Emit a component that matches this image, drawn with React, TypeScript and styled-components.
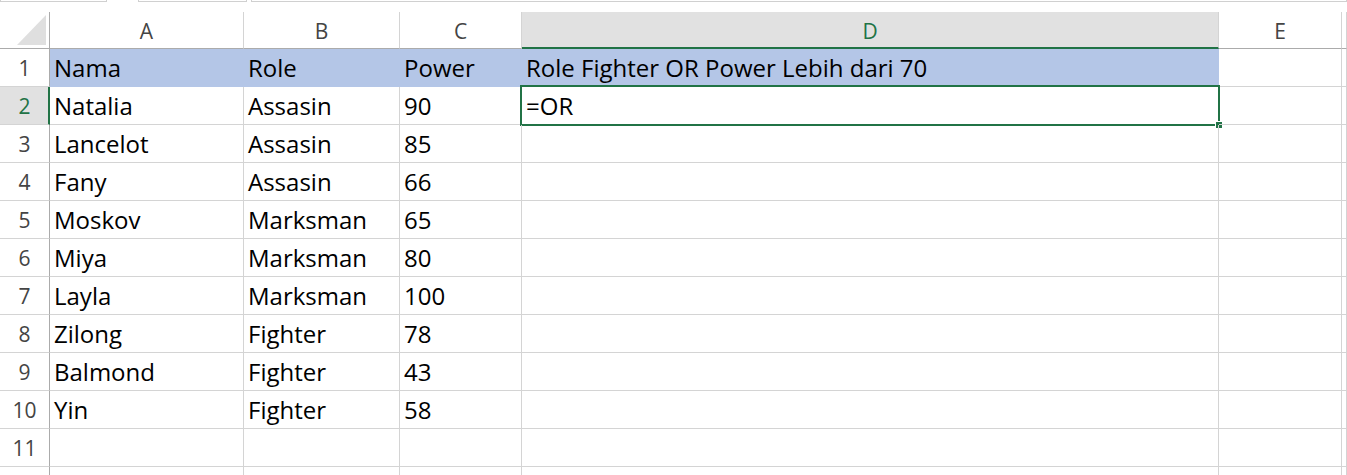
import React from "react";
import styled, { createGlobalStyle, css } from "styled-components";

const GlobalStyle = createGlobalStyle`
  html, body { margin: 0; padding: 0; background: #ffffff; }
  body { font-family: "Open Sans", "Liberation Sans", sans-serif; overflow: hidden; }
`;

const GREEN = "#217346";
const GRID = "#d4d4d4";
const HEAD_LINE = "#ababab";
const FILL = "#b4c6e7";

const Page = styled.div`
  width: 1347px;
  height: 475px;
  overflow: hidden;
  display: flex;
  flex-direction: column;
`;

const TopBar = styled.div`
  height: 12px;
  flex-shrink: 0;
  display: flex;
  align-items: flex-start;
`;

const TopBox = styled.div<{ $w?: number; $gap?: number }>`
  height: 1px;
  border: 1px solid #d0d0d0;
  border-top: none;
  margin-left: ${(p) => p.$gap ?? 0}px;
  ${(p) => (p.$w ? css`width: ${p.$w}px;` : css`flex: 1;`)}
`;

const Sheet = styled.div`
  display: grid;
  grid-template-columns: 50px 194px 156px 122px 697px 123px 1fr;
  grid-template-rows: 37px;
  grid-auto-rows: 38px;
`;

const Corner = styled.div`
  box-sizing: border-box;
  border-right: 1px solid ${HEAD_LINE};
  border-bottom: 1px solid ${HEAD_LINE};
  display: flex;
  align-items: flex-end;
  justify-content: flex-end;
  padding: 0 3px 3px 0;
`;

const ColHeader = styled.div<{ $active?: boolean }>`
  box-sizing: border-box;
  border-right: 1px solid ${GRID};
  border-bottom: 1px solid ${HEAD_LINE};
  display: flex;
  justify-content: center;
  align-items: flex-start;
  padding-top: 9px;
  font-size: 21px;
  line-height: 21px;
  color: #444444;
  ${(p) =>
    p.$active &&
    css`
      background: #e1e1e1;
      color: ${GREEN};
      border-bottom: 2px solid ${GREEN};
    `}
`;

const RowHeader = styled.div<{ $active?: boolean }>`
  box-sizing: border-box;
  border-right: 1px solid ${HEAD_LINE};
  border-bottom: 1px solid ${GRID};
  display: flex;
  justify-content: center;
  align-items: flex-start;
  padding-top: 9px;
  font-size: 21px;
  line-height: 21px;
  color: #444444;
  ${(p) =>
    p.$active &&
    css`
      background: #e1e1e1;
      color: ${GREEN};
      border-right: 2px solid ${GREEN};
      padding-left: 1px;
    `}
`;

const Cell = styled.div<{ $fill?: boolean }>`
  box-sizing: border-box;
  position: relative;
  border-right: 1px solid ${GRID};
  border-bottom: 1px solid ${GRID};
  padding: 7px 0 0 4px;
  font-size: 24px;
  line-height: 24px;
  color: #000000;
  white-space: nowrap;
  ${(p) =>
    p.$fill &&
    css`
      background: ${FILL};
      border-color: ${FILL};
    `}
`;

const Selection = styled.div`
  position: absolute;
  top: -2px;
  left: -2px;
  right: -2px;
  bottom: -2px;
  border: 2px solid ${GREEN};
  pointer-events: none;
`;

const FillHandle = styled.div`
  position: absolute;
  right: -5px;
  bottom: -5px;
  width: 6px;
  height: 6px;
  background: ${GREEN};
  border: 1px solid #ffffff;
`;

const columns = ["A", "B", "C", "D", "E", ""];

const rows: string[][] = [
  ["Nama", "Role", "Power", "Role Fighter OR Power Lebih dari 70"],
  ["Natalia", "Assasin", "90", "=OR"],
  ["Lancelot", "Assasin", "85", ""],
  ["Fany", "Assasin", "66", ""],
  ["Moskov", "Marksman", "65", ""],
  ["Miya", "Marksman", "80", ""],
  ["Layla", "Marksman", "100", ""],
  ["Zilong", "Fighter", "78", ""],
  ["Balmond", "Fighter", "43", ""],
  ["Yin", "Fighter", "58", ""],
  ["", "", "", ""],
  ["", "", "", ""],
];

export default function App() {
  return (
    <Page>
      <GlobalStyle />
      <TopBar>
        <TopBox $w={105} />
        <TopBox $w={107} $gap={31} />
        <TopBox $gap={4} />
      </TopBar>
      <Sheet>
        <Corner>
          <svg width="29" height="30" viewBox="0 0 29 30">
            <polygon points="29,0 29,30 0,30" fill="#dfdfdf" />
          </svg>
        </Corner>
        {columns.map((c, i) => (
          <ColHeader key={i} $active={c === "D"}>
            {c}
          </ColHeader>
        ))}
        {rows.map((r, ri) => {
          const rowNo = ri + 1;
          return (
            <React.Fragment key={ri}>
              <RowHeader $active={rowNo === 2}>{rowNo <= 11 ? rowNo : ""}</RowHeader>
              {r.map((v, ci) => (
                <Cell key={ci} $fill={rowNo === 1}>
                  {v}
                  {rowNo === 2 && ci === 3 && (
                    <Selection>
                      <FillHandle />
                    </Selection>
                  )}
                </Cell>
              ))}
              <Cell />
              <Cell />
            </React.Fragment>
          );
        })}
      </Sheet>
    </Page>
  );
}
